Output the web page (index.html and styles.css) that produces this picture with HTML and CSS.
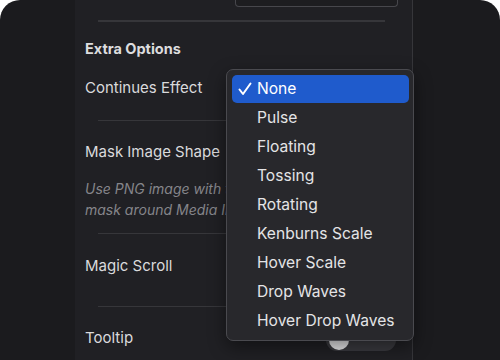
FILE: index.html
```html
<!DOCTYPE html>
<html>
<head>
    <meta charset="UTF-8">
    <title>Extra Options</title>
    <link rel="stylesheet" href="styles.css">
</head>
<body>
<div class="frame">
    <div class="panel">
        <div class="top-field"></div>
        <div class="sep sep-first"></div>

        <h3 class="heading">Extra Options</h3>

        <div class="row row-effect">
            <span class="label">Continues Effect</span>
        </div>
        <div class="sep sep-effect"></div>

        <div class="row row-mask">
            <span class="label">Mask Image Shape</span>
        </div>
        <p class="hint">Use PNG image with the shape you want to mask around Media Image.</p>
        <div class="sep sep-mask"></div>

        <div class="row row-magic">
            <span class="label">Magic Scroll</span>
        </div>
        <div class="sep sep-magic"></div>

        <div class="row row-tooltip">
            <span class="label">Tooltip</span>
            <span class="toggle"><span class="knob"></span></span>
        </div>
    </div>

    <ul class="menu">
        <li class="item active">
            <svg class="check" width="14" height="14" viewBox="0 0 14 14">
                <polyline points="1.5,7.5 5,12 12.5,1.5" fill="none" stroke="#fff" stroke-width="2" stroke-linecap="round" stroke-linejoin="round"/>
            </svg>
            None
        </li>
        <li class="item">Pulse</li>
        <li class="item">Floating</li>
        <li class="item">Tossing</li>
        <li class="item">Rotating</li>
        <li class="item">Kenburns Scale</li>
        <li class="item">Hover Scale</li>
        <li class="item">Drop Waves</li>
        <li class="item">Hover Drop Waves</li>
    </ul>
</div>
</body>
</html>
```

FILE: styles.css
```css
* {
    margin: 0;
    padding: 0;
    box-sizing: border-box;
}

body {
    background: #fff;
    font-family: Inter, "Liberation Sans", Arial, sans-serif;
}

ul, li {
    list-style: none;
}

.frame {
    position: relative;
    width: 500px;
    height: 360px;
    padding-left: 75px;
    background: #1b1b1e;
    border-radius: 20px 20px 0 0;
    overflow: hidden;
}

.panel {
    width: 338px;
    height: 360px;
    padding-left: 10px;
    background: #202024;
    border-right: 1px solid #36363a;
    color: #dadadc;
}

.top-field {
    width: 163px;
    height: 7px;
    margin-left: 150px;
    border: 1px solid #47474c;
    border-top: none;
    border-radius: 0 0 4px 4px;
    background: #1d1d20;
}

.sep {
    height: 1px;
    margin-left: 13px;
    margin-right: 27px;
    background: #36363a;
}

.sep-first {
    margin-top: 13px;
    height: 2px;
}

.heading {
    margin-top: 17px;
    font-size: 14.5px;
    font-weight: 700;
    line-height: 20px;
    color: #dcdcde;
}

.row {
    display: flex;
    align-items: center;
    justify-content: space-between;
    height: 20px;
    font-size: 15px;
    line-height: 20px;
}

.row-effect {
    margin-top: 19px;
}

.sep-effect {
    margin-top: 22px;
}

.row-mask {
    margin-top: 21px;
}

.hint {
    margin-top: 16px;
    width: 300px;
    font-size: 14px;
    font-style: italic;
    line-height: 21px;
    color: #85858a;
}

.sep-mask {
    margin-top: 13px;
}

.row-magic {
    margin-top: 22px;
}

.sep-magic {
    margin-top: 30px;
}

.row-tooltip {
    margin-top: 21px;
}

.toggle {
    display: flex;
    align-items: center;
    width: 70px;
    height: 22px;
    margin-right: 16px;
    margin-top: 3px;
    padding-left: 3px;
    border-radius: 11px;
    background: #3a3a3f;
}

.knob {
    width: 20px;
    height: 20px;
    border-radius: 50%;
    background: #e8e8ea;
}

.menu {
    position: absolute;
    left: 226px;
    top: 69px;
    width: 188px;
    height: 272px;
    padding: 4px 4px 5px 5px;
    border: 1px solid #4a4a4f;
    border-radius: 7px;
    background: #28282c;
    box-shadow: 0 6px 18px rgba(0, 0, 0, 0.45);
}

.item {
    position: relative;
    height: 29px;
    padding-left: 25px;
    font-size: 15.6px;
    line-height: 29px;
    color: #e4e4e6;
}

.item.active {
    height: 28px;
    margin-top: 1px;
    line-height: 27px;
    border-radius: 5px;
    background: #1f5bcc;
    color: #fff;
}

.check {
    position: absolute;
    left: 6px;
    top: 7px;
}
```
